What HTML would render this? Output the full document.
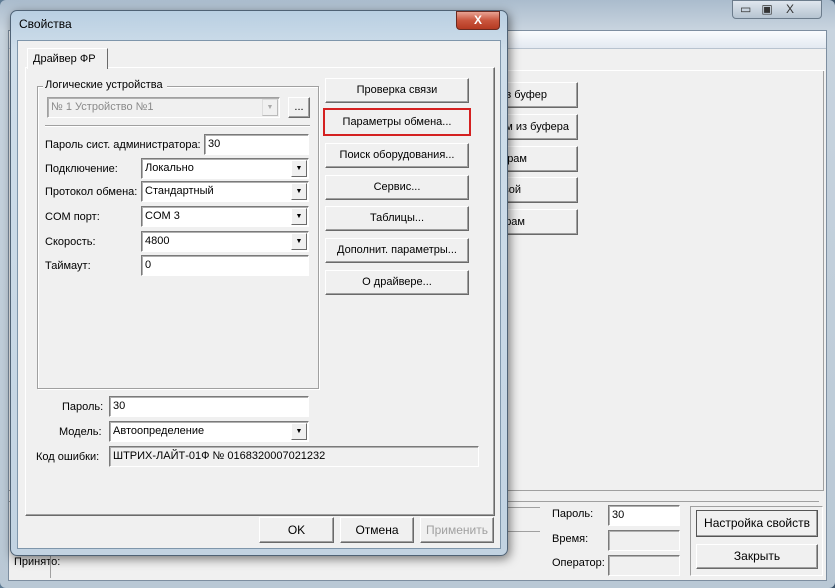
<!DOCTYPE html>
<html><head><meta charset="utf-8"><style>
*{box-sizing:border-box;margin:0;padding:0}
body{width:835px;height:588px;overflow:hidden;position:relative;font-family:"Liberation Sans",sans-serif;font-size:11px;color:#000;background:linear-gradient(90deg,#5d7a93,#9db3c6 30%,#c9d6e1 60%,#8aa2b8 85%,#3d556c)}
.a{position:absolute}
.btn{position:absolute;background:#f0f0f0;border:1px solid;border-color:#fff #6a6a6a #6a6a6a #fff;box-shadow:inset -1px -1px 0 #a0a0a0;text-align:center;font-size:11px}
.in{position:absolute;background:#fff;border:1px solid;border-color:#7a7a7a #fff #fff #7a7a7a;box-shadow:inset 1px 1px 0 #b0b0b0;padding:3px 0 0 3px;font-size:11px}
.dd{position:absolute;right:1px;top:1px;bottom:1px;width:16px;background:#f0f0f0;border:1px solid;border-color:#fff #6a6a6a #6a6a6a #fff;font-size:7px;text-align:center;line-height:15px}
.lb{position:absolute;font-size:11px}
</style></head><body>
<div class="a" style="left:0;top:0;width:835px;height:588px;border-radius:6px;background:linear-gradient(180deg,#aabccd,#c8d4df 30px,#b9c8d5 100%)"></div>
<div class="a" style="left:732px;top:0;width:90px;height:19px;background:linear-gradient(#dfe6ee,#b6c4d1);border:1px solid #6c7c8c;border-radius:0 0 4px 4px"></div>
<div class="a" style="left:740px;top:2px;font-size:12px;color:#333">▭&nbsp;&nbsp;&nbsp;▣&nbsp;&nbsp;&nbsp;&nbsp;X</div>
<div class="a" style="left:8px;top:30px;width:819px;height:551px;background:#f0f0f0;border:1px solid #7d8ea0"></div>
<div class="a" style="left:9px;top:31px;width:817px;height:18px;background:linear-gradient(#fafcfe,#e3e9f1);border-bottom:1px solid #b8c3cf"></div>
<div class="a" style="left:9px;top:70px;width:816px;height:1px;background:#fff"></div>
<div class="a" style="left:9px;top:71px;width:815px;height:420px;border-right:1px solid #a0a0a0;border-bottom:1px solid #a0a0a0"></div>
<div class="btn" style="left:460px;top:82px;width:118px;height:26px;line-height:24px;text-align:right;padding-right:30px">из буфер</div>
<div class="btn" style="left:460px;top:114px;width:118px;height:26px;line-height:24px;text-align:right;padding-right:8px">ом из буфера</div>
<div class="btn" style="left:460px;top:146px;width:118px;height:26px;line-height:24px;text-align:right;padding-right:50px">рам</div>
<div class="btn" style="left:460px;top:177px;width:118px;height:26px;line-height:24px;text-align:right;padding-right:56px">вой</div>
<div class="btn" style="left:460px;top:209px;width:118px;height:26px;line-height:24px;text-align:right;padding-right:52px">рам</div>
<div class="a" style="left:9px;top:501px;width:810px;height:1px;background:#a0a0a0"></div>
<div class="a" style="left:500px;top:507px;width:40px;height:1px;background:#a0a0a0"></div>
<div class="a" style="left:500px;top:531px;width:40px;height:1px;background:#a0a0a0"></div>
<div class="lb" style="left:552px;top:508px">Пароль:</div>
<div class="in" style="left:608px;top:505px;width:72px;height:21px">30</div>
<div class="lb" style="left:552px;top:533px">Время:</div>
<div class="in" style="left:608px;top:530px;width:72px;height:21px;background:#f0f0f0"></div>
<div class="lb" style="left:552px;top:557px">Оператор:</div>
<div class="in" style="left:608px;top:555px;width:72px;height:21px;background:#f0f0f0"></div>
<div class="a" style="left:690px;top:506px;width:133px;height:70px;border:1px solid #a0a0a0;border-right-color:#fff;border-bottom-color:#fff"></div>
<div class="btn" style="left:696px;top:510px;width:122px;height:27px;line-height:25px;border-color:#555;font-size:12px">Настройка свойств</div>
<div class="btn" style="left:696px;top:544px;width:122px;height:25px;line-height:23px;font-size:12px">Закрыть</div>
<div class="lb" style="left:14px;top:556px">Принято:</div>
<div class="a" style="left:50px;top:553px;width:1px;height:25px;background:#a0a0a0"></div>

<div class="a" style="left:10px;top:10px;width:498px;height:546px;border-radius:7px;border:1px solid #4f6275;background:linear-gradient(180deg,#b9cfe2,#cfdeea 40px,#c2d3e2);box-shadow:2px 3px 10px rgba(0,0,0,.5)"></div>
<div class="a" style="left:19px;top:17px;font-size:12px">Свойства</div>
<div class="a" style="left:456px;top:11px;width:44px;height:19px;border-radius:0 0 4px 4px;border:1px solid #6b2a20;background:linear-gradient(#e8a393,#c9553d 50%,#b53a22);color:#fff;font-weight:bold;text-align:center;font-size:12px;line-height:17px">X</div>
<div class="a" style="left:17px;top:40px;width:484px;height:509px;background:#f0f0f0;border:1px solid #7f96ab"></div>
<div class="a" style="left:25px;top:67px;width:470px;height:449px;border:1px solid;border-color:#fff #6a6a6a #6a6a6a #fff;box-shadow:inset -1px -1px 0 #a0a0a0"></div>
<div class="a" style="left:27px;top:48px;width:81px;height:21px;background:#f0f0f0;border:1px solid;border-color:#fff #6a6a6a transparent #fff;border-bottom:none;padding:4px 0 0 5px">Драйвер ФР</div>
<div class="a" style="left:37px;top:86px;width:282px;height:303px;border:1px solid #a0a0a0;box-shadow:1px 1px 0 #fff,inset 1px 1px 0 #fff"></div>
<div class="lb" style="left:43px;top:79px;background:#f0f0f0;padding:0 4px 0 2px">Логические устройства</div>
<div class="in" style="left:47px;top:97px;width:233px;height:21px;background:#f0f0f0;color:#8a8a8a;border-color:#a0a0a0 #fff #fff #a0a0a0">№ 1 Устройство №1<div class="dd" style="color:#aaa;border-color:#ddd #bbb #bbb #ddd">▼</div></div>
<div class="btn" style="left:288px;top:97px;width:22px;height:21px;line-height:19px">...</div>
<div class="a" style="left:45px;top:125px;width:265px;height:1px;background:#a0a0a0;box-shadow:0 1px 0 #fff"></div>
<div class="lb" style="left:45px;top:139px">Пароль сист. администратора:</div>
<div class="in" style="left:204px;top:134px;width:105px;height:21px">30</div>
<div class="lb" style="left:45px;top:163px">Подключение:</div>
<div class="in" style="left:141px;top:158px;width:168px;height:21px">Локально<div class="dd">▼</div></div>
<div class="lb" style="left:45px;top:186px">Протокол обмена:</div>
<div class="in" style="left:141px;top:181px;width:168px;height:21px">Стандартный<div class="dd">▼</div></div>
<div class="lb" style="left:45px;top:211px">COM порт:</div>
<div class="in" style="left:141px;top:206px;width:168px;height:21px">COM 3<div class="dd">▼</div></div>
<div class="lb" style="left:45px;top:236px">Скорость:</div>
<div class="in" style="left:141px;top:231px;width:168px;height:21px">4800<div class="dd">▼</div></div>
<div class="lb" style="left:45px;top:260px">Таймаут:</div>
<div class="in" style="left:141px;top:255px;width:168px;height:21px">0</div>
<div class="btn" style="left:325px;top:78px;width:144px;height:25px;line-height:23px">Проверка связи</div>
<div class="btn" style="left:323px;top:108px;width:148px;height:28px;line-height:24px;border:2px solid #d42020;box-shadow:none">Параметры обмена...</div>
<div class="btn" style="left:325px;top:143px;width:144px;height:25px;line-height:23px">Поиск оборудования...</div>
<div class="btn" style="left:325px;top:175px;width:144px;height:25px;line-height:23px">Сервис...</div>
<div class="btn" style="left:325px;top:206px;width:144px;height:25px;line-height:23px">Таблицы...</div>
<div class="btn" style="left:325px;top:238px;width:144px;height:25px;line-height:23px">Дополнит. параметры...</div>
<div class="btn" style="left:325px;top:270px;width:144px;height:25px;line-height:23px">О драйвере...</div>
<div class="lb" style="left:62px;top:401px">Пароль:</div>
<div class="in" style="left:109px;top:396px;width:200px;height:21px">30</div>
<div class="lb" style="left:59px;top:426px">Модель:</div>
<div class="in" style="left:109px;top:421px;width:200px;height:21px">Автоопределение<div class="dd">▼</div></div>
<div class="lb" style="left:36px;top:451px">Код ошибки:</div>
<div class="in" style="left:109px;top:446px;width:370px;height:21px;background:#f0f0f0">ШТРИХ-ЛАЙТ-01Ф № 0168320007021232</div>
<div class="btn" style="left:259px;top:517px;width:75px;height:26px;line-height:24px;font-size:12px">OK</div>
<div class="btn" style="left:340px;top:517px;width:74px;height:26px;line-height:24px;font-size:12px">Отмена</div>
<div class="btn" style="left:420px;top:517px;width:74px;height:26px;line-height:24px;font-size:12px;color:#a0a0a0">Применить</div>
</body></html>
